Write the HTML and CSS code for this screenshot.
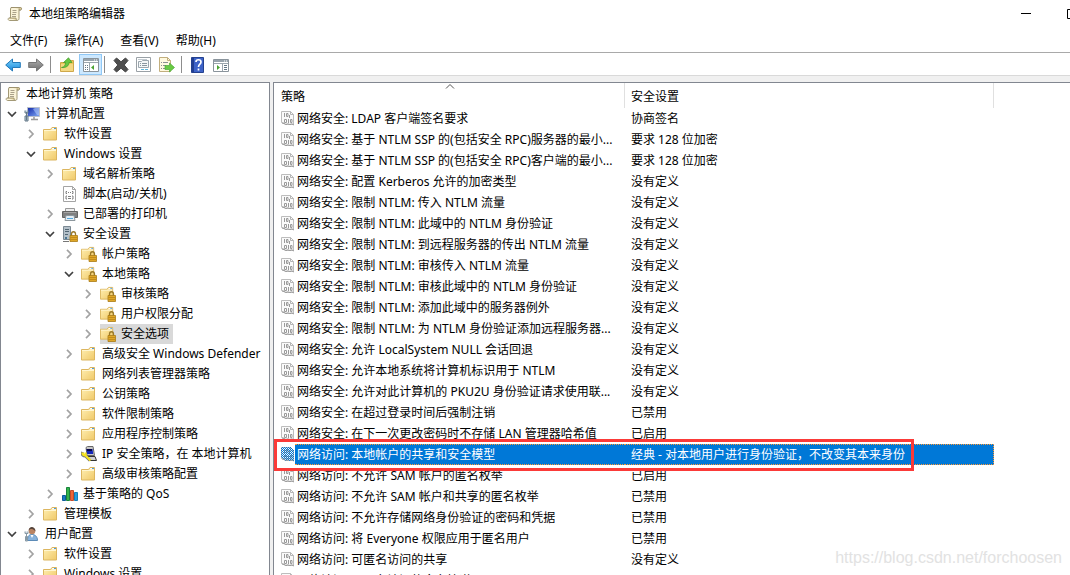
FILE: index.html
```html
<!DOCTYPE html>
<html lang="zh-CN">
<head>
<meta charset="utf-8">
<meta name="viewport" content="width=device-width, initial-scale=1">
<title>本地组策略编辑器</title>
<link rel="stylesheet" href="styles.css">
</head>
<body>
<svg class="sprite" aria-hidden="true">
  <defs>
    <linearGradient id="gFolder" x1="0" y1="0" x2="1" y2="1"><stop offset="0" stop-color="#fff0b4"/><stop offset="1" stop-color="#f0c968"/></linearGradient>
    <linearGradient id="gBlue" x1="0" y1="0" x2="0" y2="1"><stop offset="0" stop-color="#7ed3fb"/><stop offset="1" stop-color="#1487dc"/></linearGradient>
    <linearGradient id="gGray" x1="0" y1="0" x2="0" y2="1"><stop offset="0" stop-color="#b0b0b0"/><stop offset="1" stop-color="#6c6c6c"/></linearGradient>
    <linearGradient id="gScreen" x1="0" y1="0" x2="1" y2="1"><stop offset="0" stop-color="#1228a8"/><stop offset="1" stop-color="#7fa8f4"/></linearGradient>
    <pattern id="checker" width="2" height="2" patternUnits="userSpaceOnUse"><path d="M0 0h1v1H0zM1 1h1v1H1z" fill="#0078d7"/></pattern>
    <symbol id="scroll" viewBox="0 0 16 16">
      <path d="M4 1.500h9.500c1.300 0 1.300 2.300 0 2.500H12v8.500c0 1.300-.8 2-2 2H2.500c-1.500 0-2-2.500-.2-2.500H3.500V3z" fill="#faf3d8" stroke="#a39976"/>
      <path d="M4 1.500h9.500c1.500 0 1.200 2.500 0 2.500H12V2.500M2.300 12H9c0 2 .8 2.500 1.500 2.300" fill="#dfcf9b" stroke="#958a68" stroke-width=".8"/>
      <path d="M5.500 4.500h4M5.500 6.500h4M5 8.500h4M5 10.500h4" stroke="#aaa18a"/>
    </symbol>
    <symbol id="folder" viewBox="0 0 16 16">
      <path d="M.5 3.500h7l1.500-2h4.500v12.500H.5z" fill="url(#gFolder)" stroke="#dcb660"/>
      <path d="M9.500 2h3.500v1.500H8.500z" fill="#fff"/><path d="M11 2h2v1h-2z" fill="#4b9bdf"/>
      <path d="M1 4.500h12" stroke="#fff6cf"/>
    </symbol>
    <symbol id="lock" viewBox="0 0 16 16">
      <path d="M9.500 10V8c0-3 4-3 4 0v2" fill="none" stroke="#9b7a2a" stroke-width="1.300"/>
      <path d="M8 9.500h7.500v6H8z" fill="#e0a828" stroke="#a97b16" stroke-width=".8"/><path d="M8.500 11.500h6.500M8.500 13.500h6.500" stroke="#b47e16" stroke-width=".7"/>
    </symbol>
    <symbol id="folderlock" viewBox="0 0 16 16"><use href="#folder" width="15" height="15"/><use href="#lock"/></symbol>
    <symbol id="computer" viewBox="0 0 16 16">
      <path d="M3.500 1.500h12v9h-12z" fill="url(#gScreen)" stroke="#b9bfca"/><path d="M10 11v2M7 13.500h7" stroke="#999" stroke-width="1.500"/>
      <path d="M9 3l4 6h2V2h-4z" fill="#b8d2ff" opacity=".55"/>
      <path d="M2.500 6v8.500M1 4.500v2.500h3V4.500M1 10h3v5H1z" fill="#c0d2df" stroke="#657887"/>
    </symbol>
    <symbol id="script" viewBox="0 0 16 16">
      <path d="M1.500.5h9l3 3v12h-12z" fill="#fff" stroke="#a4a4a4"/><path d="M10.500.5v3h3" fill="none" stroke="#a4a4a4"/>
      <path d="M5 5.500H4v2h1M10 5.500h1v2h-1M6 6.500h1M8 6.500h1M5 10H4v3h1M10 10h1v3h-1M6 10.500h3M6 12.500h3" fill="none" stroke="#737373" stroke-width=".9"/>
    </symbol>
    <symbol id="printer" viewBox="0 0 16 16">
      <path d="M3.500 2.500h9v4h-9z" fill="#eee" stroke="#999"/><path d="M.5 5.500h15v6H.5z" fill="#808080" stroke="#646464"/>
      <path d="M2 6.500h12" stroke="#a5a5a5"/><path d="M4 9.500h8l1 5H3z" fill="#e4eef5" stroke="#8d979d"/><path d="M5 12.500h6" stroke="#56a8df"/>
    </symbol>
    <symbol id="server" viewBox="0 0 16 16">
      <path d="M1.500.5h7v13h-7z" fill="#b4c0c9" stroke="#7b8993"/><path d="M3 3.500h4M3 5.500h4M3 8.500h3" stroke="#526673"/><path d="M3 11h2v2H3z" fill="#4b7894"/>
      <path d="M1 15.500h6" stroke="#777"/><use href="#lock"/>
    </symbol>
    <symbol id="ipsec" viewBox="0 0 16 16">
      <path d="M5 1.500l1.500-1H12l1.500 9H6z" fill="#c8c8c8" stroke="#666"/><path d="M5.500 3h6l.7 5h-6z" fill="#1425b9"/><path d="M5.500 3h5.500v2H6z" fill="#060646"/>
      <path d="M6 10.500h8l1.500 4H8z" fill="#d0d0d0" stroke="#333"/><path d="M1.500 6c-1 3 1 4 3 4L9 14.500" fill="none" stroke="#777" stroke-width="3"/><path d="M1.500 6.500c0 3 2 3 3 3L9.500 14.500M4.500 6.500v3" fill="none" stroke="#f7e31c" stroke-width="2.200"/>
    </symbol>
    <symbol id="bars" viewBox="0 0 16 16">
      <path d="M.5 9.500h3v5h-3z" fill="#187ac3" stroke="#0d5b99"/><path d="M4.500 1.500h3v13h-3z" fill="#34b34a" stroke="#17833a"/><path d="M8.500 4.500h3v10h-3z" fill="#ee6538" stroke="#c44b2a"/><path d="M12.500 6.500h3v8h-3z" fill="#269ddd" stroke="#167fb9"/>
    </symbol>
    <symbol id="user" viewBox="0 0 16 16">
      <path d="M3.500 14.500c0-5 2-6 4.500-6s5.500 1.500 5.500 6z" fill="#86b2dc" stroke="#5c8bb7"/><path d="M6.500 9L8 12l1.500-3z" fill="#fff"/>
      <circle cx="8" cy="5" r="3.300" fill="#b98463"/><path d="M4.700 5c-.5-5.500 6.800-5.500 6.800.5-1.500-2-3-2.500-4.500-2.500-1.500 0-2 1-2.300 2z" fill="#55443b"/>
      <path d="M2.500 7v7.500M1 5.500v2h3v-2M1.500 10.500h2v4.500h-2z" fill="#cfd9e1" stroke="#8799a5"/>
    </symbol>
    <symbol id="policy" viewBox="0 0 14 16">
      <path d="M.5 1.500h9l3 3v10l-2-.5-2 .5-2-.5-2 .5-2-1.500-2-.5z" fill="#fafafa" stroke="#bdbdbd"/><path d="M9.500 1.500v3h3" fill="none" stroke="#b5b5b5"/><path d="M1 13l2 .5 2 1 2-.5 2 .5 2-.5 2 1" fill="none" stroke="#989898"/>
      <g fill="none" stroke="#9a9a9a"><path d="M3.500 3v4M7.500 9v4M8.500 5v3"/><path d="M5.500 3.500h1.500v3H5.500zM3.500 9.500h2v3h-2zM9.500 9.500h1.500v3H9.500z"/></g>
    </symbol>
    <symbol id="policysel" viewBox="0 0 14 16"><use href="#policy" width="14" height="16"/><path d="M0 1h10l3 3v11l-2-1-2 1-2-1-2 1-2-2-3-1z" fill="url(#checker)"/></symbol>
    <symbol id="back" viewBox="0 0 16 16"><path d="M.7 8L7.500 2v3.500h7.800v5H7.500V14z" fill="url(#gBlue)" stroke="#2379b8"/></symbol>
    <symbol id="forward" viewBox="0 0 16 16"><path d="M15.300 8L8.500 2v3.500H.7v5h7.800V14z" fill="url(#gGray)" stroke="#777"/></symbol>
    <symbol id="up" viewBox="0 0 16 16"><path d="M1.500 5.500H8l1.500-2h5v11h-13z" fill="#edc75a" stroke="#cfa84a"/><path d="M2 7h12v7H2z" fill="#f4d883"/><path d="M2.500 10.500C5.500 10 6.500 8 6.500 5.500H4.500L9.500.8l3.500 4.700h-3c0 3.500-3 5.500-7.500 5z" fill="#68c642" stroke="#3d9b28" stroke-width=".7"/></symbol>
    <symbol id="tree" viewBox="0 0 16 16"><path d="M.5 1.500h15v13H.5z" fill="#fff" stroke="#8a949c"/><path d="M1 2h14v2H1z" fill="#98a4ad"/><path d="M11 3h1M13 3h1" stroke="#fff"/><path d="M1 5.500h14M6.500 6v8" stroke="#9ba6ae"/><path d="M2 8.500h1M4 8.500h1M2 10.500h1M4 10.500h1M2 12.500h1M4 12.500h1" stroke="#647786"/><path d="M11 8v5l-3-2.500z" fill="#4aa331"/></symbol>
    <symbol id="delete" viewBox="0 0 16 16"><path d="M1 3.500L3.500 1 8 4.800 12.500 1 15 3.500 11.200 8 15 12.500 12.500 15 8 11.200 3.500 15 1 12.500 4.800 8z" fill="#4e4e4e" stroke="#444"/></symbol>
    <symbol id="props" viewBox="0 0 16 16"><path d="M.5.500h14v14H.5z" fill="#fff" stroke="#9aa1a6"/><path d="M2.500 4.500h3l1-1h6v7h-10z" fill="#f4f7f8" stroke="#9ba6ae"/><path d="M2 2.500h9" stroke="#c1c9cf"/><path d="M4 6.500h1M6 6.500h5M4 8.500h1M6 8.500h5" stroke="#8a97a0"/><path d="M5 12.500h3M9 12.500h3" stroke="#60b7dc"/></symbol>
    <symbol id="export" viewBox="0 0 16 16"><path d="M.5.500h8l3 3v11H.5z" fill="#fff9df" stroke="#c2af7e"/><path d="M8.500.5v3h3" fill="none" stroke="#c2af7e"/><path d="M2 5.500h1M4 5.500h5M2 8.500h1M4 8.500h3M2 11.500h1M4 11.500h3" stroke="#8b8e91"/><path d="M6 8.500h4.500V6l5 4.500-5 4.500v-2.500H6z" fill="#69ca43" stroke="#4da93b" stroke-width=".7"/></symbol>
    <symbol id="help" viewBox="0 0 16 16"><path d="M1.500.5h12v15h-12z" fill="#3d62c7" stroke="#24418e"/><path d="M2 1h2v14H2z" fill="#203d92"/><path d="M6 5c0-3 5-3 5 0 0 2.300-2.500 2-2.500 5M8.500 11.500v2" fill="none" stroke="#fff" stroke-width="1.700"/></symbol>
    <symbol id="action" viewBox="0 0 16 16"><path d="M.5 2.500h15v12H.5z" fill="#fff" stroke="#8a949c"/><path d="M1 3h14v2H1z" fill="#98a4ad"/><path d="M11 4h1M13 4h1" stroke="#fff"/><path d="M1 6.500h14M9.500 7v7" stroke="#9ba6ae"/><path d="M11 8.500h3M11 10.500h3M11 12.500h3" stroke="#647786"/><path d="M4 8v5l3-2.500z" fill="#4aa331"/></symbol>
    <symbol id="right" viewBox="0 0 10 10"><path d="M3 .8L7 5 3 9.200" fill="none" stroke="#a3a3a3" stroke-width="1.700"/></symbol>
    <symbol id="down" viewBox="0 0 10 10"><path d="M1 3l4 4 4-4" fill="none" stroke="#404040" stroke-width="1.700"/></symbol>
  </defs>
</svg>
<div class="window">
  <header class="titlebar">
    <svg class="icon"><use href="#scroll"/></svg>
    <h1 class="title">本地组策略编辑器</h1>
    <div class="window-controls">
      <button class="window-button" aria-label="最小化"><svg class="glyph" viewBox="0 0 10 10"><path d="M0 4.500h10" stroke="#000"/></svg></button>
      <button class="window-button" aria-label="最大化"><svg class="glyph" viewBox="0 0 10 10"><path d="M.5.500h9v9h-9z" fill="none" stroke="#000"/></svg></button>
    </div>
  </header>
  <nav class="menubar">
    <button class="menu">文件(F)</button><button class="menu">操作(A)</button><button class="menu">查看(V)</button><button class="menu">帮助(H)</button>
  </nav>
  <div class="toolbar" role="toolbar">
    <button class="tool" aria-label="后退"><svg class="icon"><use href="#back"/></svg></button>
    <button class="tool" aria-label="前进"><svg class="icon"><use href="#forward"/></svg></button>
    <span class="divider"></span>
    <button class="tool" aria-label="上移一级"><svg class="icon"><use href="#up"/></svg></button>
    <button class="tool tool-on" aria-label="显示控制台树" aria-pressed="true"><svg class="icon"><use href="#tree"/></svg></button>
    <span class="divider"></span>
    <button class="tool" aria-label="删除"><svg class="icon"><use href="#delete"/></svg></button>
    <button class="tool" aria-label="属性"><svg class="icon"><use href="#props"/></svg></button>
    <button class="tool" aria-label="导出列表"><svg class="icon"><use href="#export"/></svg></button>
    <span class="divider"></span>
    <button class="tool" aria-label="帮助"><svg class="icon"><use href="#help"/></svg></button>
    <button class="tool" aria-label="显示操作窗格"><svg class="icon"><use href="#action"/></svg></button>
  </div>
  <main class="panes">
    <aside class="tree-pane">
      <div class="node"><svg class="icon"><use href="#scroll"/></svg><span class="label">本地计算机 策略</span></div>
      <ul class="branch branch-top">
        <li><div class="node"><button class="toggle" aria-label="折叠"><svg class="glyph"><use href="#down"/></svg></button><svg class="icon"><use href="#computer"/></svg><span class="label">计算机配置</span></div>
          <ul class="branch">
            <li><div class="node"><button class="toggle" aria-label="展开"><svg class="glyph"><use href="#right"/></svg></button><svg class="icon"><use href="#folder"/></svg><span class="label">软件设置</span></div></li>
            <li><div class="node"><button class="toggle" aria-label="折叠"><svg class="glyph"><use href="#down"/></svg></button><svg class="icon"><use href="#folder"/></svg><span class="label">Windows 设置</span></div>
              <ul class="branch">
                <li><div class="node"><button class="toggle" aria-label="展开"><svg class="glyph"><use href="#right"/></svg></button><svg class="icon"><use href="#folder"/></svg><span class="label">域名解析策略</span></div></li>
                <li><div class="node"><span class="toggle"></span><svg class="icon"><use href="#script"/></svg><span class="label">脚本(启动/关机)</span></div></li>
                <li><div class="node"><button class="toggle" aria-label="展开"><svg class="glyph"><use href="#right"/></svg></button><svg class="icon"><use href="#printer"/></svg><span class="label">已部署的打印机</span></div></li>
                <li><div class="node"><button class="toggle" aria-label="折叠"><svg class="glyph"><use href="#down"/></svg></button><svg class="icon"><use href="#server"/></svg><span class="label">安全设置</span></div>
                  <ul class="branch">
                    <li><div class="node"><button class="toggle" aria-label="展开"><svg class="glyph"><use href="#right"/></svg></button><svg class="icon"><use href="#folderlock"/></svg><span class="label">帐户策略</span></div></li>
                    <li><div class="node"><button class="toggle" aria-label="折叠"><svg class="glyph"><use href="#down"/></svg></button><svg class="icon"><use href="#folderlock"/></svg><span class="label">本地策略</span></div>
                      <ul class="branch">
                        <li><div class="node"><button class="toggle" aria-label="展开"><svg class="glyph"><use href="#right"/></svg></button><svg class="icon"><use href="#folderlock"/></svg><span class="label">审核策略</span></div></li>
                        <li><div class="node"><button class="toggle" aria-label="展开"><svg class="glyph"><use href="#right"/></svg></button><svg class="icon"><use href="#folderlock"/></svg><span class="label">用户权限分配</span></div></li>
                        <li><div class="node node-selected"><button class="toggle" aria-label="展开"><svg class="glyph"><use href="#right"/></svg></button><svg class="icon"><use href="#folderlock"/></svg><span class="label">安全选项</span></div></li>
                      </ul>
                    </li>
                    <li><div class="node"><button class="toggle" aria-label="展开"><svg class="glyph"><use href="#right"/></svg></button><svg class="icon"><use href="#folder"/></svg><span class="label">高级安全 Windows Defender</span></div></li>
                    <li><div class="node"><span class="toggle"></span><svg class="icon"><use href="#folder"/></svg><span class="label">网络列表管理器策略</span></div></li>
                    <li><div class="node"><button class="toggle" aria-label="展开"><svg class="glyph"><use href="#right"/></svg></button><svg class="icon"><use href="#folder"/></svg><span class="label">公钥策略</span></div></li>
                    <li><div class="node"><button class="toggle" aria-label="展开"><svg class="glyph"><use href="#right"/></svg></button><svg class="icon"><use href="#folder"/></svg><span class="label">软件限制策略</span></div></li>
                    <li><div class="node"><button class="toggle" aria-label="展开"><svg class="glyph"><use href="#right"/></svg></button><svg class="icon"><use href="#folder"/></svg><span class="label">应用程序控制策略</span></div></li>
                    <li><div class="node"><button class="toggle" aria-label="展开"><svg class="glyph"><use href="#right"/></svg></button><svg class="icon"><use href="#ipsec"/></svg><span class="label">IP 安全策略，在 本地计算机</span></div></li>
                    <li><div class="node"><button class="toggle" aria-label="展开"><svg class="glyph"><use href="#right"/></svg></button><svg class="icon"><use href="#folder"/></svg><span class="label">高级审核策略配置</span></div></li>
                  </ul>
                </li>
                <li><div class="node"><button class="toggle" aria-label="展开"><svg class="glyph"><use href="#right"/></svg></button><svg class="icon"><use href="#bars"/></svg><span class="label">基于策略的 QoS</span></div></li>
              </ul>
            </li>
            <li><div class="node"><button class="toggle" aria-label="展开"><svg class="glyph"><use href="#right"/></svg></button><svg class="icon"><use href="#folder"/></svg><span class="label">管理模板</span></div></li>
          </ul>
        </li>
        <li><div class="node"><button class="toggle" aria-label="折叠"><svg class="glyph"><use href="#down"/></svg></button><svg class="icon"><use href="#user"/></svg><span class="label">用户配置</span></div>
          <ul class="branch">
            <li><div class="node"><button class="toggle" aria-label="展开"><svg class="glyph"><use href="#right"/></svg></button><svg class="icon"><use href="#folder"/></svg><span class="label">软件设置</span></div></li>
            <li><div class="node"><button class="toggle" aria-label="展开"><svg class="glyph"><use href="#right"/></svg></button><svg class="icon"><use href="#folder"/></svg><span class="label">Windows 设置</span></div></li>
          </ul>
        </li>
      </ul>
    </aside>
    <section class="list-pane">
      <table class="policies">
        <colgroup><col class="col-policy"><col class="col-setting"></colgroup>
        <thead><tr><th>策略<svg class="sort" viewBox="0 0 10 5" aria-hidden="true"><path d="M1 4.500l4-4 4 4" fill="none" stroke="#555"/></svg></th><th>安全设置</th></tr></thead>
        <tbody>
          <tr><td><div class="policy"><svg class="icon"><use href="#policy"/></svg><span class="name">网络安全: LDAP 客户端签名要求</span></div></td><td>协商签名</td></tr>
          <tr><td><div class="policy"><svg class="icon"><use href="#policy"/></svg><span class="name">网络安全: 基于 NTLM SSP 的(包括安全 RPC)服务器的最小...</span></div></td><td>要求 128 位加密</td></tr>
          <tr><td><div class="policy"><svg class="icon"><use href="#policy"/></svg><span class="name">网络安全: 基于 NTLM SSP 的(包括安全 RPC)客户端的最小...</span></div></td><td>要求 128 位加密</td></tr>
          <tr><td><div class="policy"><svg class="icon"><use href="#policy"/></svg><span class="name">网络安全: 配置 Kerberos 允许的加密类型</span></div></td><td>没有定义</td></tr>
          <tr><td><div class="policy"><svg class="icon"><use href="#policy"/></svg><span class="name">网络安全: 限制 NTLM: 传入 NTLM 流量</span></div></td><td>没有定义</td></tr>
          <tr><td><div class="policy"><svg class="icon"><use href="#policy"/></svg><span class="name">网络安全: 限制 NTLM: 此域中的 NTLM 身份验证</span></div></td><td>没有定义</td></tr>
          <tr><td><div class="policy"><svg class="icon"><use href="#policy"/></svg><span class="name">网络安全: 限制 NTLM: 到远程服务器的传出 NTLM 流量</span></div></td><td>没有定义</td></tr>
          <tr><td><div class="policy"><svg class="icon"><use href="#policy"/></svg><span class="name">网络安全: 限制 NTLM: 审核传入 NTLM 流量</span></div></td><td>没有定义</td></tr>
          <tr><td><div class="policy"><svg class="icon"><use href="#policy"/></svg><span class="name">网络安全: 限制 NTLM: 审核此域中的 NTLM 身份验证</span></div></td><td>没有定义</td></tr>
          <tr><td><div class="policy"><svg class="icon"><use href="#policy"/></svg><span class="name">网络安全: 限制 NTLM: 添加此域中的服务器例外</span></div></td><td>没有定义</td></tr>
          <tr><td><div class="policy"><svg class="icon"><use href="#policy"/></svg><span class="name">网络安全: 限制 NTLM: 为 NTLM 身份验证添加远程服务器...</span></div></td><td>没有定义</td></tr>
          <tr><td><div class="policy"><svg class="icon"><use href="#policy"/></svg><span class="name">网络安全: 允许 LocalSystem NULL 会话回退</span></div></td><td>没有定义</td></tr>
          <tr><td><div class="policy"><svg class="icon"><use href="#policy"/></svg><span class="name">网络安全: 允许本地系统将计算机标识用于 NTLM</span></div></td><td>没有定义</td></tr>
          <tr><td><div class="policy"><svg class="icon"><use href="#policy"/></svg><span class="name">网络安全: 允许对此计算机的 PKU2U 身份验证请求使用联...</span></div></td><td>没有定义</td></tr>
          <tr><td><div class="policy"><svg class="icon"><use href="#policy"/></svg><span class="name">网络安全: 在超过登录时间后强制注销</span></div></td><td>已禁用</td></tr>
          <tr><td><div class="policy"><svg class="icon"><use href="#policy"/></svg><span class="name">网络安全: 在下一次更改密码时不存储 LAN 管理器哈希值</span></div></td><td>已启用</td></tr>
          <tr class="row-selected"><td><div class="policy"><svg class="icon"><use href="#policysel"/></svg><span class="name">网络访问: 本地帐户的共享和安全模型</span></div><span class="callout"></span></td><td>经典 - 对本地用户进行身份验证，不改变其本来身份</td></tr>
          <tr><td><div class="policy"><svg class="icon"><use href="#policy"/></svg><span class="name">网络访问: 不允许 SAM 帐户的匿名枚举</span></div></td><td>已启用</td></tr>
          <tr><td><div class="policy"><svg class="icon"><use href="#policy"/></svg><span class="name">网络访问: 不允许 SAM 帐户和共享的匿名枚举</span></div></td><td>已禁用</td></tr>
          <tr><td><div class="policy"><svg class="icon"><use href="#policy"/></svg><span class="name">网络访问: 不允许存储网络身份验证的密码和凭据</span></div></td><td>已禁用</td></tr>
          <tr><td><div class="policy"><svg class="icon"><use href="#policy"/></svg><span class="name">网络访问: 将 Everyone 权限应用于匿名用户</span></div></td><td>已禁用</td></tr>
          <tr><td><div class="policy"><svg class="icon"><use href="#policy"/></svg><span class="name">网络访问: 可匿名访问的共享</span></div></td><td>没有定义</td></tr>
          <tr><td><div class="policy"><svg class="icon"><use href="#policy"/></svg><span class="name">网络访问: 可匿名访问的命名管道</span></div></td><td></td></tr>
        </tbody>
      </table>
    </section>
  </main>
  <span class="watermark">https://blog.csdn.net/forchoosen</span>
</div>
</body>
</html>
```
FILE: styles.css
```css
* { box-sizing: border-box; }

body {
  margin: 0;
  background: #fff;
  color: #000;
  font: 12px/20px "Noto Sans", "Noto Sans CJK SC", sans-serif;
}

button {
  margin: 0;
  padding: 0;
  border: 0;
  background: none;
  color: inherit;
  font: inherit;
}

.sprite { position: absolute; width: 0; height: 0; }
.icon { display: block; flex: none; width: 16px; height: 16px; }
.glyph { display: block; flex: none; width: 10px; height: 10px; }

.window {
  position: relative;
  display: flex;
  flex-direction: column;
  height: 100vh;
  overflow: hidden;
}

.titlebar {
  display: flex;
  flex: none;
  align-items: center;
  gap: 6px;
  height: 28px;
  padding-left: 7px;
}
.title { margin: 0; font-size: 12px; font-weight: 400; }
.window-controls { display: flex; margin: 0 -25px 0 auto; }
.window-button {
  display: flex;
  align-items: center;
  justify-content: center;
  width: 46px;
  height: 28px;
}

.menubar {
  display: flex;
  flex: none;
  gap: 17px;
  height: 25px;
  padding: 3px 10px 1px;
  border-bottom: 1px solid #a9a9a9;
}

.toolbar {
  display: flex;
  flex: none;
  height: 23px;
  padding: 1px 2px 0;
  border-bottom: 1px solid #d9d9d9;
}
.tool {
  display: flex;
  align-items: center;
  width: 23px;
  height: 21px;
  padding-left: 3px;
}
.tool-on { border: 1px solid #90c8f6; background: #cce8ff; }
.divider { width: 8px; padding: 2px; }
.divider::before {
  content: "";
  display: block;
  width: 1px;
  height: 17px;
  background: #8d8d8d;
}

.panes {
  display: flex;
  flex: 1;
  gap: 3px;
  min-height: 0;
  padding-top: 6px;
  background: #f0f0f0;
}

.tree-pane {
  flex: none;
  width: 270px;
  padding: 1px 0 0 4px;
  border: 1px solid #828790;
  border-bottom: 0;
  background: #fff;
  overflow: hidden;
}
.branch { margin: 0; padding: 0 0 0 19px; list-style: none; }
.branch-top { padding-left: 2px; }
.node { display: flex; align-items: center; height: 20px; white-space: nowrap; }
.toggle { display: flex; flex: none; width: 17px; }
.label { height: 20px; padding: 0 4px 0 5px; }
.node-selected .icon { height: 20px; padding: 2px 0; background: #d9d9d9; }
.node-selected .label { background: #d9d9d9; }

.list-pane {
  flex: 1;
  min-width: 0;
  border: 1px solid #828790;
  border-width: 1px 0 0 1px;
  background: #fff;
  overflow: hidden;
}
.policies { width: 720px; border-collapse: separate; border-spacing: 0; table-layout: fixed; }
.col-policy { width: 351px; }
.policies th {
  position: relative;
  height: 25px;
  padding: 2px 7px 0;
  border-right: 1px solid #e0e0e0;
  font-weight: 400;
  text-align: left;
}
.policies th + th { padding-left: 6px; }
.sort { position: absolute; top: 1px; left: 171px; width: 10px; height: 5px; }
.policies td {
  height: 21px;
  padding: 0 0 0 6px;
  line-height: 19px;
  white-space: nowrap;
}
.policies td:first-child { position: relative; padding-left: 7px; }
.policy { display: flex; align-items: flex-start; height: 21px; }
.policy .icon { width: 14px; margin-top: 2px; }
.name { flex: 1; height: 21px; padding: 0 2px; border: 1px solid transparent; border-right: 0; border-left: 0; }

.row-selected .name,
.row-selected td + td {
  border: 1px dotted #ff9a35;
  border-right: 0;
  border-left: 0;
  background: #0078d7;
  color: #fff;
}
.row-selected td + td { border-right: 1px dotted #ff9a35; }
.callout {
  position: absolute;
  z-index: 1;
  top: -5px;
  left: 0;
  width: 640px;
  height: 32px;
  border: 3px solid #fb3a38;
}

.watermark {
  position: absolute;
  right: 8px;
  bottom: 7px;
  color: #e2e2e2;
  font-family: "Liberation Sans", sans-serif;
  font-size: 16px;
}
```
